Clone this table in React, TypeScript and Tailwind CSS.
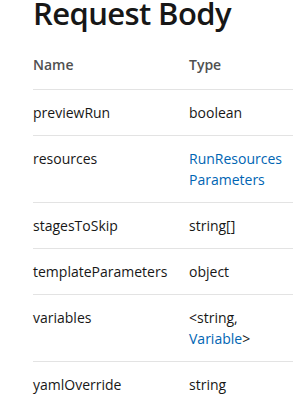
import React from 'react';

interface Param {
  name: string;
  type: React.ReactNode;
}

const link = 'text-[#0065b3]';

const params: Param[] = [
  { name: 'previewRun', type: 'boolean' },
  {
    name: 'resources',
    type: (
      <span className={link}>
        RunResources
        <br />
        Parameters
      </span>
    ),
  },
  { name: 'stagesToSkip', type: 'string[]' },
  { name: 'templateParameters', type: 'object' },
  {
    name: 'variables',
    type: (
      <>
        &lt;string,
        <br />
        <span className={link}>Variable</span>&gt;
      </>
    ),
  },
  { name: 'yamlOverride', type: 'string' },
];

export default function App() {
  return (
    <div
      className="w-[293px] h-[407px] overflow-hidden bg-white pl-[33px] text-[#171717]"
      style={{ fontFamily: '"Open Sans", "Noto Sans", sans-serif' }}
    >
      <h2 className="mt-[-7px] text-[31px] leading-[40px] font-semibold tracking-[-0.6px] whitespace-nowrap">
        Request Body
      </h2>

      <div className="mt-[9px]">
        <div className="flex border-b border-[#e3e3e3] pt-[12px] pb-[14px] text-[14px] leading-[21px] font-semibold text-[#505050]">
          <div className="w-[156px] shrink-0">Name</div>
          <div className="flex-1">Type</div>
        </div>

        {params.map((p) => (
          <div key={p.name} className="flex border-b border-[#e3e3e3] py-[12px] text-[14px] leading-[21px]">
            <div className="w-[156px] shrink-0">{p.name}</div>
            <div className="flex-1">{p.type}</div>
          </div>
        ))}
      </div>
    </div>
  );
}
